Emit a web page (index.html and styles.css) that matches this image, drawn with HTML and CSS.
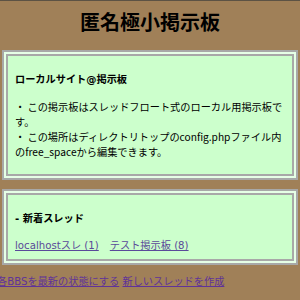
FILE: index.html
```html
<!DOCTYPE html>
<html lang="ja">
<head>
    <meta charset="UTF-8">
    <meta name="viewport" content="width=device-width, initial-scale=1.0">
    <title>匿名極小掲示板</title>
    <link rel="stylesheet" href="styles.css">
</head>
<body>

    <header>
        <h1>匿名極小掲示板</h1>
    </header>

    <main>
        <div class="box">
            <div class="box-inner">
                <h3>ローカルサイト@掲示板</h3>
                <p>・ この掲示板はスレッドフロート式のローカル用掲示板です。<br>・ この場所はディレクトリトップのconfig.phpファイル内のfree_spaceから編集できます。</p>
            </div>
        </div>

        <div class="box">
            <div class="box-inner">
                <h3>- 新着スレッド</h3>
                <div class="thread-list">
                    <a href="#">localhostスレ (1)</a>
                    <a href="#">テスト掲示板 (8)</a>
                </div>
            </div>
        </div>
    </main>

    <div class="footer-links">
        <a href="#">各BBSを最新の状態にする</a> <a href="#">新しいスレッドを作成</a>
    </div>

</body>
</html>
```

FILE: styles.css
```css
body {
    font-family: "DejaVu Sans", "Noto Sans CJK JP", sans-serif;
    font-size: 10.2px;
    line-height: 15px;
    margin: 0;
    padding: 0;
    background-color: #a08058;
    border-top: 1px solid #5c5244;
    color: #000;
    overflow: hidden;
}
header h1 {
    font-family: "Noto Sans CJK JP", sans-serif;
    font-size: 20px;
    line-height: 29px;
    text-align: center;
    margin: 6px 0 14px;
}
main {
    display: flex;
    flex-direction: column;
    gap: 9px;
    margin: 0 2px;
}
.box {
    border: 2px solid #a8a8a8;
    background-color: #e6ffe6;
    padding: 2px;
}
.box-inner {
    border: 2px solid #a8a8a8;
    background-color: #ccffcc;
    padding: 0 7px;
}
.box-inner h3 {
    font-size: 10.2px;
    margin: 16px 0 12px;
}
.box-inner p {
    font-family: "Noto Sans CJK JP", sans-serif;
    margin: 0 0 15px;
}
.thread-list {
    display: flex;
    gap: 11px;
    margin: 10px 0 6px;
}
.thread-list a {
    color: #5a4a99;
}
a {
    color: #5f3399;
}
.footer-links {
    margin: 9px 0 0 -3px;
    white-space: nowrap;
}
```
